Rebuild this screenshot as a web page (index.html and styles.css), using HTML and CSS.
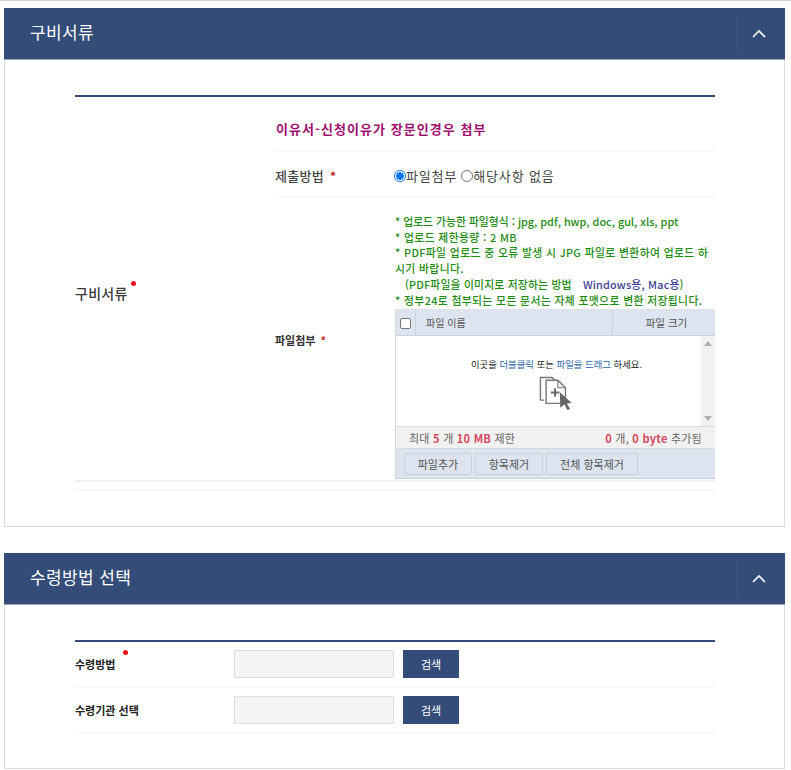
FILE: index.html
```html
<!DOCTYPE html>
<html lang="ko">
<head>
<meta charset="utf-8">
<title>구비서류</title>
<link rel="stylesheet" href="styles.css">
</head>
<body>
<div class="topline"></div>
<section class="panel panel-docs">
  <header class="panel-head">
    <h2>구비서류</h2>
    <div class="toggle"><svg width="14" height="9" viewBox="0 0 14 9"><path d="M1 8 L7 2 L13 8" fill="none" stroke="#fff" stroke-width="1.6"/></svg></div>
  </header>
  <div class="panel-body body-docs">
    <div class="form-table">
      <div class="docs-row">
        <div class="docs-label"><span class="dotted">구비서류<i class="dot"></i></span></div>
        <div class="docs-main">
          <div class="doc-title">이유서-신청이유가 장문인경우 첨부</div>
          <div class="method-row">
            <div class="sub-label">제출방법 <em>*</em></div>
            <div class="radios">
              <span class="radio checked"></span><span>파일첨부</span>
              <span class="radio second"></span><span>해당사항 없음</span>
            </div>
          </div>
          <div class="file-row">
            <div class="file-label">파일첨부 <em>*</em></div>
            <div class="file-col">
              <div class="notes">
                <p>* 업로드 가능한 파일형식 : jpg, pdf, hwp, doc, gul, xls, ppt</p>
                <p class="wide">* 업로드 제한용량 : 2 MB</p>
                <p class="wide">* PDF파일 업로드 중 오류 발생 시 JPG 파일로 변환하여 업로드 하시기 바랍니다.</p>
                <p class="indent">(PDF파일을 이미지로 저장하는 방법 <a class="os">Windows용, Mac용</a>)</p>
                <p class="wide">* 정부24로 첨부되는 모든 문서는 자체 포맷으로 변환 저장됩니다.</p>
              </div>
              <div class="uploader">
                <div class="up-head">
                  <div class="up-check"><span class="checkbox"></span></div>
                  <div class="up-name">파일 이름</div>
                  <div class="up-size">파일 크기</div>
                </div>
                <div class="up-body">
                  <div class="drop">
                    <p>이곳을 <b>더블클릭</b> 또는 <b>파일을 드래그</b> 하세요.</p>
                    <svg class="drop-icon" width="34" height="34" viewBox="0 0 36 36">
                      <path d="M5.500 25.500 H1.500 V1.500 H14 L17 4.500" fill="none" stroke="#777" stroke-width="1.500"/>
                      <path d="M7.500 4.500 H20 L28 12.500 V29 H7.500 Z" fill="#fff" stroke="#777" stroke-width="1.500"/>
                      <path d="M20 4.500 V12.500 H28" fill="none" stroke="#777" stroke-width="1.200"/>
                      <path d="M17 13 V22 M12.500 17.500 H21.500" stroke="#666" stroke-width="2"/>
                      <path d="M22 17 L34.500 28.500 L29.500 29 L33 35 L30 36 L27 30 L22.500 33.500 Z" fill="#666"/>
                    </svg>
                  </div>
                  <div class="scrollbar"><span class="arrow up"></span><span class="arrow down"></span></div>
                </div>
                <div class="up-status">
                  <div>최대 <strong>5</strong> 개 <strong>10 MB</strong> 제한</div>
                  <div><strong>0</strong> 개, <strong>0 byte</strong> 추가됨</div>
                </div>
                <div class="up-actions">
                  <button class="up-btn b1" type="button">파일추가</button>
                  <button class="up-btn b2" type="button">항목제거</button>
                  <button class="up-btn b3" type="button">전체 항목제거</button>
                </div>
              </div>
            </div>
          </div>
        </div>
      </div>
      <div class="spacer-row"></div>
    </div>
  </div>
</section>
<section class="panel panel-recv">
  <header class="panel-head">
    <h2>수령방법 선택</h2>
    <div class="toggle"><svg width="14" height="9" viewBox="0 0 14 9"><path d="M1 8 L7 2 L13 8" fill="none" stroke="#fff" stroke-width="1.6"/></svg></div>
  </header>
  <div class="panel-body body-recv">
    <div class="form-table">
      <div class="recv-row">
        <div class="recv-label"><span class="dotted2">수령방법<i class="dot"></i></span></div>
        <div class="fake-input"></div>
        <button class="search" type="button">검색</button>
      </div>
      <div class="recv-row">
        <div class="recv-label">수령기관 선택</div>
        <div class="fake-input"></div>
        <button class="search" type="button">검색</button>
      </div>
    </div>
  </div>
</section>
</body>
</html>
```
FILE: styles.css
```css
* { box-sizing: border-box; }
html, body { margin: 0; padding: 0; background: #fff; }
body {
  width: 791px;
  height: 770px;
  overflow: hidden;
  font-family: "Noto Sans CJK KR", "Liberation Sans", sans-serif;
  color: #333;
}
.topline { height: 1px; background: #cfcfcf; }
.panel {
  margin: 7px 0 0 4px;
  width: 781px;
  border: 1px solid #dcdcdc;
  border-top: 0;
}
.panel-docs { height: 519px; }
.panel-recv { margin-top: 26px; height: 216px; }
.panel-head {
  margin: 0 -1px;
  height: 52px;
  background: #344d78;
  border-bottom: 1px solid #9ba8bd;
  display: flex;
  align-items: center;
  justify-content: space-between;
  padding-left: 26px;
}
.panel-head h2 {
  margin: -3px 0 0;
  font-size: 17px;
  font-weight: 400;
  letter-spacing: 0.4px;
  color: #fff;
  line-height: 24px;
}
.toggle {
  width: 48px;
  height: 36px;
  border-left: 1px solid #42597f;
  display: flex;
  align-items: center;
  justify-content: center;
  padding-right: 5px;
  margin-top: -1px;
}
.toggle svg { display: block; }
.panel-body { padding: 0 69px 0 70px; }
.body-docs { padding-top: 35px; }
.body-recv { padding-top: 35px; }
.form-table { width: 640px; border-top: 2px solid #344d78; }

.docs-row { display: flex; height: 385px; border-bottom: 2px solid #f0f0f0; }
.docs-label {
  width: 200px;
  display: flex;
  align-items: center;
  font-size: 14px;
  font-weight: 500;
  letter-spacing: 0.3px;
  color: #3a3a3a;
  padding-top: 8px;
}
.dotted { position: relative; }
.dot {
  position: absolute;
  width: 5px;
  height: 5px;
  border-radius: 50%;
  background: #e8101c;
  right: -8px;
  top: -2px;
}
.docs-main { width: 440px; }
.doc-title {
  height: 55px;
  line-height: 20px;
  padding-top: 22px;
  padding-left: 1px;
  font-size: 13px;
  font-weight: 700;
  letter-spacing: 1.05px;
  color: #a0106e;
  border-bottom: 2px solid #f7f7f7;
}
.method-row {
  display: flex;
  align-items: center;
  height: 46px;
  padding-top: 3px;
  border-bottom: 2px solid #f7f7f7;
  font-size: 13px;
  color: #444;
}
.sub-label { width: 119px; font-weight: 500; letter-spacing: 0.3px; }
.sub-label em { font-size: 12px; }
em { color: #c0281c; font-style: normal; font-weight: 700; margin-left: 2px; }
.radios { display: flex; align-items: center; letter-spacing: 0.85px; }
.radio {
  width: 12px;
  height: 12px;
  border-radius: 50%;
  border: 1px solid #767676;
  background: #fff;
  flex: none;
}
.radio.checked { border: 1px solid #0075ff; background: radial-gradient(circle, #0075ff 0 3.500px, #fff 4px); }
.radio.second { margin-left: 4px; }
.file-row { display: flex; height: 282px; }
.file-label {
  width: 120px;
  padding-top: 132px;
  font-size: 11px;
  font-weight: 700;
  color: #333;
  line-height: 20px;
}
.file-col { width: 320px; padding-top: 16px; }
.notes {
  width: 314px;
  height: 95px;
  font-size: 10.800px;
  line-height: 15.700px;
  font-weight: 500;
  color: #1d8a10;
  word-break: break-all;
}
.notes p { margin: 0; }
.notes .wide { letter-spacing: 0.38px; }
.notes .indent { padding-left: 10px; letter-spacing: 0.2px; white-space: nowrap; }
.os { color: #3c3c96; padding-left: 8px; }
.uploader {
  width: 320px;
  height: 170px;
  font-size: 10px;
  color: #555;
  border-left: 1px solid #d2d8e2;
  border-bottom: 1px solid #c7d0df;
}
.up-head {
  display: flex;
  height: 27px;
  background: #dde4ef;
  border-bottom: 1px solid #c9d2e0;
  line-height: 27px;
}
.up-check {
  width: 20px;
  border-right: 1px solid #c9d2e0;
  display: flex;
  align-items: center;
  justify-content: center;
}
.checkbox {
  width: 11px;
  height: 11px;
  background: #fff;
  border: 1px solid #767676;
  border-radius: 2px;
  margin-top: 2px;
}
.up-name { width: 197px; padding-left: 10px; border-right: 1px solid #c9d2e0; }
.up-size { flex: 1; text-align: center; font-size: 10.500px; padding-left: 5px; }
.up-body { display: flex; height: 90px; background: #fff; }
.drop { width: 305px; text-align: center; padding-top: 21px; }
.drop p { margin: 0; font-size: 9.400px; line-height: 14px; color: #222; padding-left: 16px; }
.drop b { font-weight: 400; color: #2a62a8; }
.drop-icon { display: block; margin: 5px 0 0 143px; }
.scrollbar {
  width: 14px;
  background: #f1f1f1;
  position: relative;
}
.arrow {
  position: absolute;
  left: 3px;
  width: 0;
  height: 0;
  border-left: 4px solid transparent;
  border-right: 4px solid transparent;
}
.arrow.up { top: 5px; border-bottom: 5px solid #b0b0b0; }
.arrow.down { bottom: 5px; border-top: 5px solid #b0b0b0; }
.up-status {
  display: flex;
  justify-content: space-between;
  align-items: center;
  height: 23px;
  padding: 0 13px 0 13px;
  background: #f1f1f1;
  border-top: 1px solid #dcdcdc;
  border-bottom: 1px solid #d8d8d8;
  font-size: 11px;
  letter-spacing: 0.25px;
  color: #666;
}
.up-status strong { color: #d64a5e; font-weight: 700; }
.up-actions {
  display: flex;
  gap: 3px;
  height: 29px;
  padding: 4px 0 0 8px;
  background: #dde4ef;
}
.up-btn {
  height: 22px;
  padding: 0;
  background: #dde4ef;
  border: 1px solid #c6cfdd;
  border-radius: 3px;
  font: inherit;
  font-size: 11px;
  color: #555;
}
.b1 { width: 68px; }
.b2 { width: 68px; }
.b3 { width: 92px; }
.spacer-row { height: 9px; border-bottom: 2px solid #f7f7f7; }

.recv-row {
  display: flex;
  align-items: flex-start;
  height: 46px;
  padding-top: 8px;
  border-bottom: 2px solid #f7f7f7;
}
.recv-label {
  width: 159px;
  font-size: 11px;
  font-weight: 700;
  color: #222;
  line-height: 28px;
}
.dotted2 { position: relative; }
.dotted2 .dot { right: -13px; top: -6px; background: #e8101c; width: 5px; height: 5px; }
.fake-input {
  width: 160px;
  height: 28px;
  background: #f4f4f4;
  border: 1px solid #dfdfdf;
}
.search {
  margin-left: 9px;
  width: 56px;
  height: 28px;
  border: 0;
  background: #344d78;
  color: #fff;
  font: inherit;
  font-size: 11px;
  padding: 0;
}
```
